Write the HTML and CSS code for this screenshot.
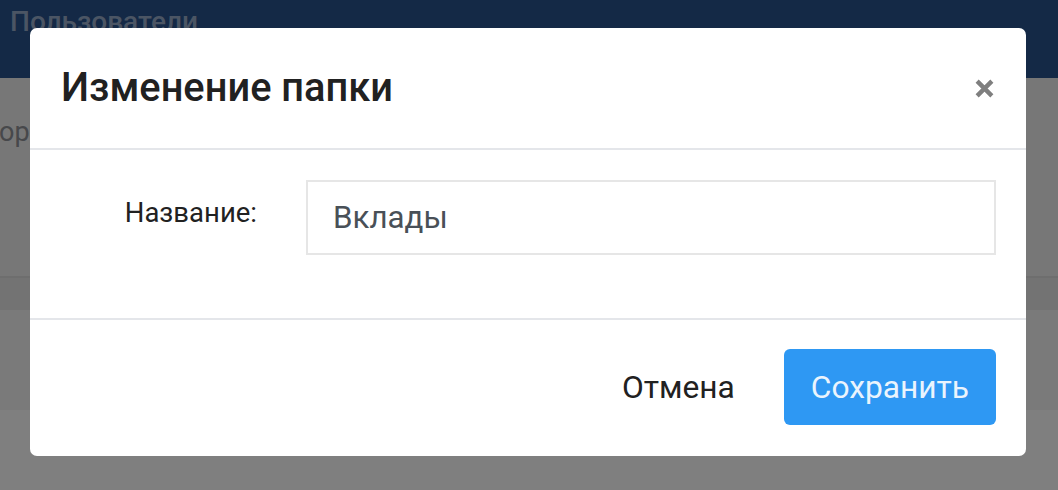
FILE: index.html
```html
<!DOCTYPE html>
<html lang="ru">
<head>
<meta charset="utf-8">
<title>Изменение папки</title>
<link rel="stylesheet" href="styles.css">
</head>
<body>
<div class="page">
  <header class="navbar"><span class="brand">Пользователи</span></header>
  <div class="content">
    <div class="toolbar"><span class="crumb">ор</span></div>
    <div class="table-head"></div>
    <div class="table-row"></div>
  </div>
</div>
<div class="overlay">
  <div class="modal">
    <div class="modal-header">
      <h1 class="modal-title">Изменение папки</h1>
      <button class="close" aria-label="Закрыть">
        <svg viewBox="0 0 20 20" width="20" height="20"><path d="M3 3 L17 17 M17 3 L3 17" stroke="currentColor" stroke-width="4.2" stroke-linecap="butt"/></svg>
      </button>
    </div>
    <div class="modal-body">
      <div class="form-row">
        <label class="form-label" for="name">Название:</label>
        <input class="form-input" id="name" type="text" value="Вклады">
      </div>
    </div>
    <div class="modal-footer">
      <button class="btn btn-link">Отмена</button>
      <button class="btn btn-primary">Сохранить</button>
    </div>
  </div>
</div>
</body>
</html>
```

FILE: styles.css
```css
* { box-sizing: border-box; }
html, body { margin: 0; padding: 0; }
body {
  width: 1058px;
  height: 490px;
  overflow: hidden;
  font-family: Roboto, "Noto Sans", "Liberation Sans", sans-serif;
  background: #ffffff;
  position: relative;
}
.page { display: flex; flex-direction: column; height: 490px; }
.navbar {
  height: 78px;
  background: #29528c;
  padding: 5px 0 0 10px;
  flex: none;
}
.brand {
  font-size: 28px;
  font-weight: 500;
  color: #97abc8;
  line-height: 34px;
}
.content { display: flex; flex-direction: column; }
.toolbar {
  height: 200px;
  background: #eeeeee;
  border-bottom: 2px solid #dddddd;
  padding: 38px 0 0 0;
}
.crumb { font-size: 27px; color: #8e9196; margin-left: -1px; }
.table-head { height: 32px; background: #e6e6e6; }
.table-row { height: 100px; background: #f4f4f4; }
.overlay {
  position: absolute;
  inset: 0;
  background: rgba(0, 0, 0, 0.5);
  padding: 28px 32px 0 30px;
}
.modal {
  background: #ffffff;
  border-radius: 7px;
  width: 996px;
  height: 428px;
  display: flex;
  flex-direction: column;
  overflow: hidden;
}
.modal-header {
  height: 122px;
  flex: none;
  display: flex;
  align-items: center;
  justify-content: space-between;
  padding: 0 31px 2px 31px;
  border-bottom: 2px solid #e4e6ea;
}
.modal-title {
  margin: 0;
  font-size: 39.8px;
  font-weight: 500;
  color: #212121;
}
.close {
  border: 0;
  background: none;
  padding: 0;
  color: #7f7f7f;
  width: 21px;
  height: 21px;
  display: flex;
  margin-top: 2px;
}
.close svg { width: 21px; height: 21px; }
.modal-body {
  padding: 30px 30px 0 30px;
  height: 170px;
  flex: none;
  border-bottom: 2px solid #e4e6ea;
}
.form-row { display: flex; align-items: flex-start; }
.form-label {
  width: 197px;
  text-align: right;
  font-size: 27.5px;
  color: #212121;
  padding-top: 16px;
  flex: none;
}
.form-input {
  margin-left: 49px;
  width: 690px;
  height: 75px;
  border: 2px solid #e6e6e6;
  border-radius: 0;
  padding: 0 25px;
  font-family: inherit;
  font-size: 31.3px;
  color: #495057;
  outline: none;
}
.modal-footer {
  flex: 1;
  display: flex;
  justify-content: flex-end;
  align-items: center;
  gap: 22px;
  padding: 0 30px 2px 0;
}
.btn {
  font-family: inherit;
  font-size: 31.7px;
  height: 76px;
  padding: 0 27px;
  border: 0;
  border-radius: 6px;
  cursor: pointer;
}
.btn-link { background: none; color: #212121; }
.btn-primary { background: #2e98f3; color: #eaf4fd; }
```
